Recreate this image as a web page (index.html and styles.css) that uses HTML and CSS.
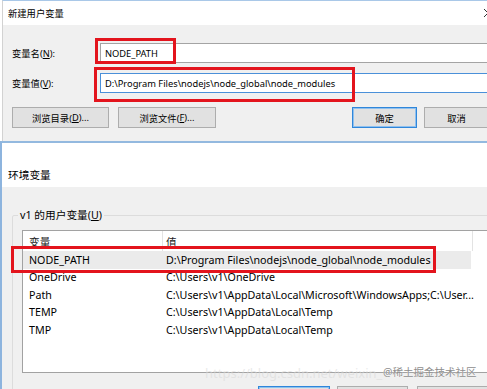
FILE: index.html
```html
<!DOCTYPE html>
<html lang="zh-CN">
<head>
<meta charset="utf-8">
<title>环境变量</title>
<link rel="stylesheet" href="styles.css">
</head>
<body>
<div class="screen">
  <div class="dlg dlg-top">
    <div class="titlebar">
      <span class="title">新建用户变量</span>
      <svg class="close" width="10" height="10" viewBox="0 0 10 10"><path d="M1 1 L9 9 M9 1 L1 9" stroke="#333" stroke-width="1" fill="none"/></svg>
    </div>
    <div class="content">
      <div class="field">
        <span class="label">变量名(<u>N</u>):</span>
        <div class="input">NODE_PATH</div>
      </div>
      <div class="field">
        <span class="label">变量值(<u>V</u>):</span>
        <div class="input focus">D:\Program Files\nodejs\node_global\node_modules</div>
      </div>
      <div class="btnrow">
        <div class="btn b-browse1">浏览目录(<u>D</u>)...</div>
        <div class="btn b-browse2">浏览文件(<u>F</u>)...</div>
        <div class="btn b-ok default">确定</div>
        <div class="btn b-cancel">取消</div>
      </div>
    </div>
    <div class="mark mark-name"></div>
    <div class="mark mark-value"></div>
  </div>

  <div class="dlg dlg-env">
    <div class="titlebar2"><span class="title">环境变量</span></div>
    <div class="content2">
      <fieldset class="group">
        <legend>v1 的用户变量(<u>U</u>)</legend>
        <div class="listview">
          <div class="lv-header">
            <div class="hcell c1">变量</div>
            <div class="hcell c2">值</div>
          </div>
          <div class="lv-row selected"><div class="cell c1">NODE_PATH</div><div class="cell c2">D:\Program Files\nodejs\node_global\node_modules</div></div>
          <div class="lv-row"><div class="cell c1">OneDrive</div><div class="cell c2">C:\Users\v1\OneDrive</div></div>
          <div class="lv-row"><div class="cell c1">Path</div><div class="cell c2">C:\Users\v1\AppData\Local\Microsoft\WindowsApps;C:\User...</div></div>
          <div class="lv-row"><div class="cell c1">TEMP</div><div class="cell c2">C:\Users\v1\AppData\Local\Temp</div></div>
          <div class="lv-row"><div class="cell c1">TMP</div><div class="cell c2">C:\Users\v1\AppData\Local\Temp</div></div>
        </div>
        <div class="btnrow2">
          <div class="btn b-new default"></div>
          <div class="btn b-edit"></div>
          <div class="btn b-del"></div>
        </div>
      </fieldset>
    </div>
    <div class="mark mark-row"></div>
    <div class="wm wm-url">https://blog.csdn.net/weixin_</div>
    <div class="wm wm-brand">@稀土掘金技术社区</div>
  </div>
</div>
</body>
</html>
```

FILE: styles.css
```css
html, body {
  margin: 0;
  padding: 0;
}
body {
  width: 487px;
  height: 389px;
  overflow: hidden;
  background: #ffffff;
  font-family: "Noto Sans", "Noto Sans CJK SC", sans-serif;
  font-size: 9.3px;
  color: #000;
}
.screen {
  width: 487px;
  height: 389px;
  overflow: hidden;
  display: flex;
  flex-direction: column;
}
u { text-decoration: underline; text-underline-offset: 1px; }

.dlg {
  position: relative;
  flex: none;
}
.dlg-top {
  height: 141px;
  box-sizing: border-box;
  border-top: 1px solid #a9c8e8;
  margin-left: 2px;
  border-left: 1px solid #d2d2d2;
  display: flex;
  flex-direction: column;
}
.titlebar {
  height: 24px;
  background: #fff;
  display: flex;
  align-items: center;
  justify-content: space-between;
  padding-left: 5px;
  overflow: hidden;
}
.title { line-height: 13px; }
.close {
  flex: none;
  margin-right: -6px;
}
.content {
  flex: 1;
  background: #f0f0f0;
  padding: 18px 0 0 9px;
  display: flex;
  flex-direction: column;
  gap: 10px;
  overflow: hidden;
}
.field {
  display: flex;
  align-items: center;
  height: 20px;
}
.label {
  width: 88px;
  flex: none;
}
.input {
  flex: none;
  width: 420px;
  height: 20px;
  box-sizing: border-box;
  border: 1px solid #a4a4a4;
  background: #fff;
  padding-left: 4px;
  display: flex;
  align-items: center;
  white-space: nowrap;
}
.input.focus { border-color: #4a90d9; }

.btnrow {
  display: flex;
  margin-top: 4px;
}
.btn {
  height: 21px;
  box-sizing: border-box;
  border: 1px solid #adadad;
  background: #e1e1e1;
  display: flex;
  align-items: center;
  justify-content: center;
  flex: none;
  white-space: nowrap;
}
.btn.default {
  border-color: #2f86da;
  box-shadow: inset 0 0 0 1px #8fc0ee;
}
.b-browse1 { width: 97px; }
.b-browse2 { width: 98px; margin-left: 9px; }
.b-ok { width: 65px; margin-left: 136px; }
.b-cancel { width: 65px; margin-left: 7px; }

.mark {
  position: absolute;
  border: 3px solid #e3141d;
  box-sizing: border-box;
}
.mark-name { left: 92px; top: 37px; width: 81px; height: 26px; }
.mark-value { left: 91px; top: 66px; width: 261px; height: 35px; }

.dlg-env {
  flex: 1;
  border-top: 2px solid #93b9df;
  border-left: 2px solid #8db4de;
  display: flex;
  flex-direction: column;
  font-size: 10.7px;
}
.titlebar2 {
  height: 44px;
  background: #fff;
  display: flex;
  align-items: flex-end;
  padding: 0 0 5px 6px;
  box-sizing: border-box;
}
.content2 {
  flex: 1;
  background: #f0f0f0;
  padding: 22px 0 0 10px;
  overflow: hidden;
}
.group {
  margin: 0;
  border: 1px solid #dcdcdc;
  border-radius: 2px;
  padding: 0 0 0 9px;
  width: 520px;
  box-sizing: border-box;
}
.group legend {
  padding: 0 2px;
  margin-left: -4px;
  line-height: 13px;
}
.listview {
  margin-top: 8px;
  width: 500px;
  height: 143px;
  box-sizing: border-box;
  border: 1px solid #a2a2a2;
  background: #fff;
  overflow: hidden;
}
.lv-header {
  display: flex;
  height: 20px;
}
.hcell {
  box-sizing: border-box;
  display: flex;
  align-items: center;
  border-right: 1px solid #e3e3e3;
  color: #1a1a1a;
  flex: none;
}
.lv-header .c1 { width: 140px; padding-left: 6px; }
.lv-header .c2 { width: 310px; padding-left: 3px; }
.lv-row {
  display: flex;
  height: 17.5px;
  align-items: center;
  width: 448px;
  white-space: nowrap;
}
.lv-row.selected { background: #ebebeb; }
.cell { box-sizing: border-box; flex: none; }
.lv-row .c1 { width: 140px; padding-left: 6px; }
.lv-row .c2 { padding-left: 3px; }

.mark-row { left: 9px; top: 103px; width: 425px; height: 27px; }

.btnrow2 {
  display: flex;
  margin-top: 13px;
  margin-left: 236px;
}
.b-new { width: 72px; }
.b-edit { width: 71px; margin-left: 7px; }
.b-del { width: 71px; margin-left: 9px; }

.wm {
  position: absolute;
  white-space: nowrap;
}
.wm-url {
  left: 203px;
  top: 221px;
  font-size: 13px;
  color: rgba(215, 215, 215, 0.55);
  font-family: "Noto Sans", sans-serif;
}
.wm-brand {
  left: 381px;
  top: 221px;
  font-size: 10.5px;
  color: #8e8e8e;
  text-shadow: 0 0 1px #fff;
}
```
